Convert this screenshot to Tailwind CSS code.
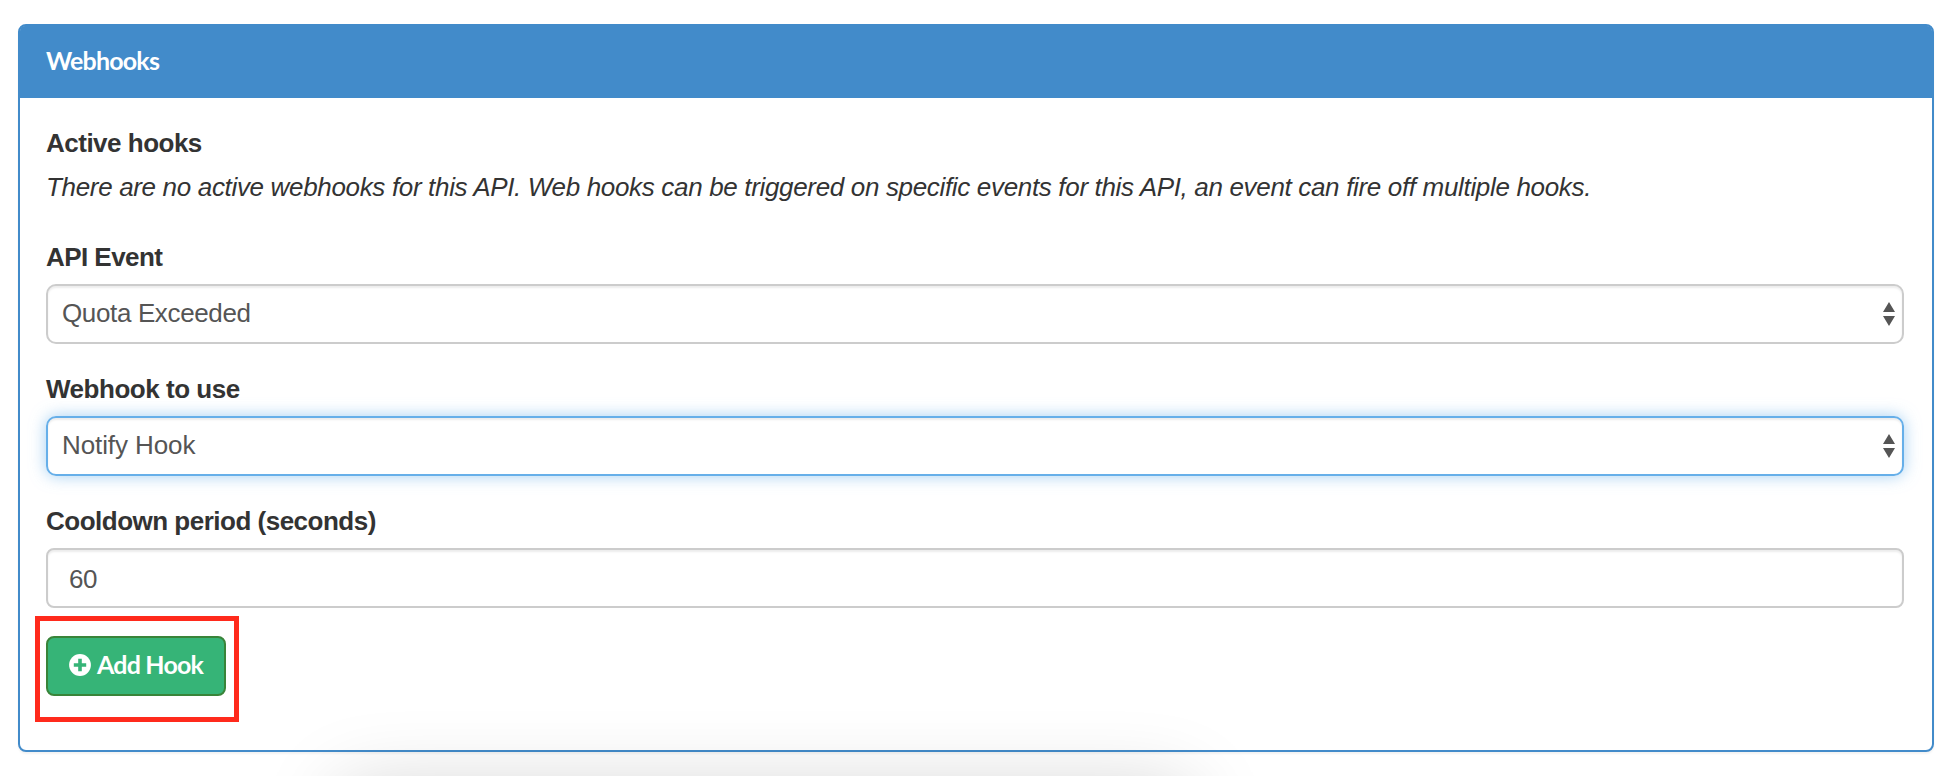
<!DOCTYPE html>
<html lang="en">
<head>
<meta charset="utf-8">
<title>Webhooks</title>
<script src="https://cdn.jsdelivr.net/npm/@tailwindcss/browser@4"></script>
</head>
<body class="relative h-[776px] overflow-hidden bg-white px-[18px] pt-6 pr-6 font-['Liberation_Sans',Arial,sans-serif] text-[26px] leading-9 text-[#333]">
<section class="flex h-[728px] flex-col rounded-lg border-2 border-[#428bca] bg-white shadow-[0_2px_2px_rgba(0,0,0,0.05)]">
  <h2 class="flex h-[72px] shrink-0 items-center rounded-t-[5px] bg-[#428bca] px-[26px] pb-1 font-['Lato',sans-serif] text-[25px] font-bold text-white"><span class="tracking-[-0.8px]">Webhooks</span></h2>
  <form class="flex flex-col items-start pt-[27px] pr-7 pl-[26px]">
    <h3 class="h-9 font-bold tracking-[-0.5px]">Active hooks</h3>
    <p class="mt-2 h-9 whitespace-nowrap tracking-[-0.333px] italic">There are no active webhooks for this API. Web hooks can be triggered on specific events for this API, an event can fire off multiple hooks.</p>
    <label class="mt-[34px] h-9 font-bold tracking-[-0.55px]">API Event</label>
    <div class="mt-[9px] flex h-[60px] w-full items-center justify-between rounded-[10px] border-2 border-[#ccc] pr-[7px] pb-[2px] pl-[14px] text-[#555] shadow-[inset_0_2px_2px_rgba(0,0,0,0.075)]">
      <span class="tracking-[-0.36px]">Quota Exceeded</span>
      <svg class="mt-[2px] h-6 w-3" viewBox="0 0 12 24" fill="#555"><path d="M6 0L12 10H0ZM0 14H12L6 24Z"/></svg>
    </div>
    <label class="mt-[27px] h-9 font-bold tracking-[-0.47px]">Webhook to use</label>
    <div class="mt-[9px] flex h-[60px] w-full items-center justify-between rounded-[10px] border-2 border-[#66afe9] pr-[7px] pb-[2px] pl-[14px] text-[#555] shadow-[inset_0_2px_2px_rgba(0,0,0,0.075),0_0_16px_rgba(102,175,233,0.6)]">
      <span class="tracking-[-0.1px]">Notify Hook</span>
      <svg class="mt-[2px] h-6 w-3" viewBox="0 0 12 24" fill="#555"><path d="M6 0L12 10H0ZM0 14H12L6 24Z"/></svg>
    </div>
    <label class="mt-[27px] h-9 font-bold tracking-[-0.5px]">Cooldown period (seconds)</label>
    <div class="mt-[9px] flex h-[60px] w-full items-center rounded-lg border-2 border-[#ccc] pt-[2px] pl-[21px] text-[#555] shadow-[inset_0_2px_2px_rgba(0,0,0,0.075)]"><span class="tracking-[-0.4px]">60</span></div>
    <button type="button" class="mt-7 flex h-[60px] w-[180px] items-center rounded-lg border-2 border-[#398439] bg-[#36b477] pb-[2px] pl-[21px] font-['Lato',sans-serif] text-[25px] font-bold text-white">
      <svg class="mr-[6px] size-[22px] shrink-0" viewBox="0 0 22 22"><circle cx="11" cy="11" r="10.9" fill="#fff"/><path d="M9.2 4.8h3.6v4.4h4.4v3.6h-4.4v4.4H9.2v-4.4H4.8V9.2h4.4z" fill="#36b477"/></svg>
      <span class="pb-[2px] whitespace-nowrap tracking-[-0.8px]">Add Hook</span>
    </button>
  </form>
</section>
<!-- highlight around the action button -->
<div class="absolute top-[616px] left-[35px] h-[106px] w-[204px] border-[5px] border-[#ff2a1c]"></div>
<!-- soft shadow rising from below the viewport -->
<div class="pointer-events-none absolute inset-0 overflow-hidden">
  <div class="absolute top-[788px] left-[340px] h-[100px] w-[850px] shadow-[0_0_80px_rgba(0,0,0,0.18)]"></div>
</div>
</body>
</html>
